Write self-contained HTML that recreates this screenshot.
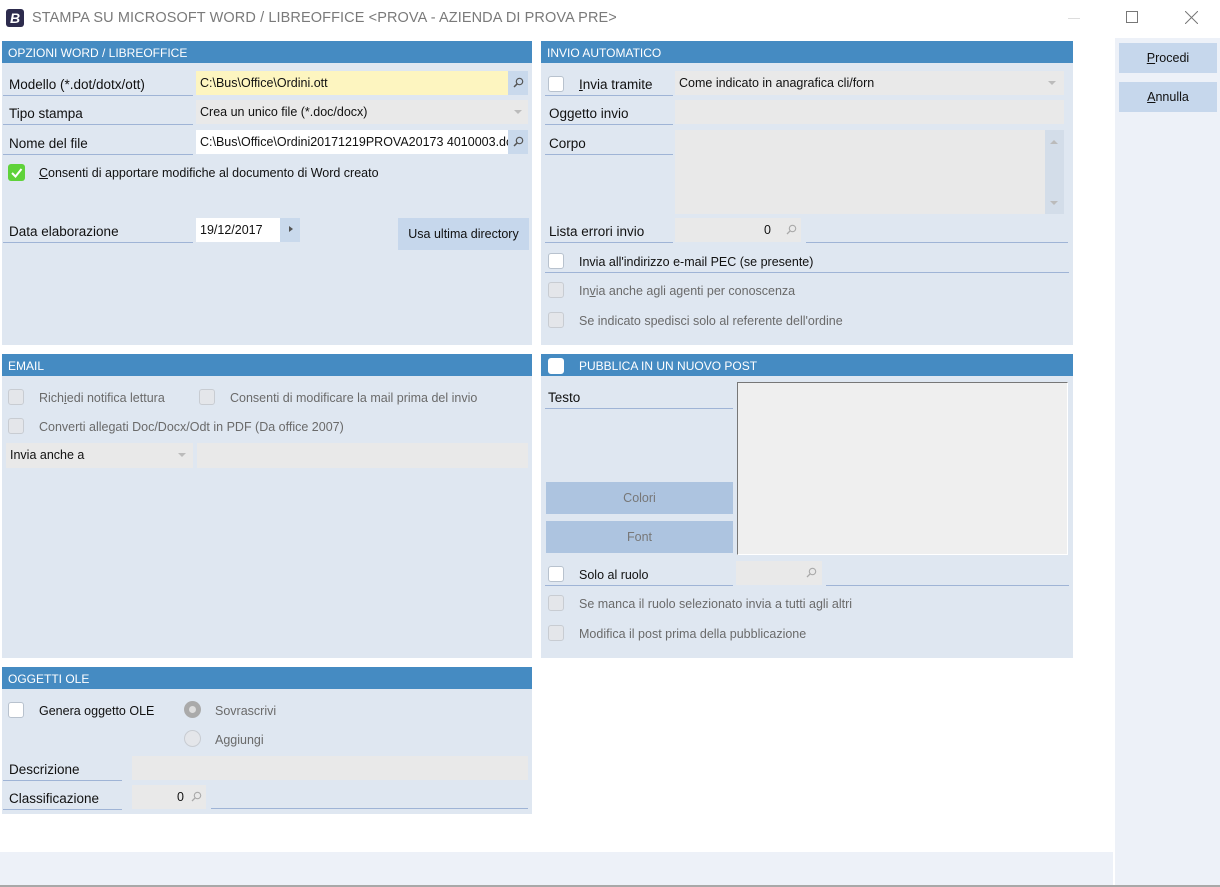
<!DOCTYPE html>
<html><head><meta charset="utf-8">
<style>
*{box-sizing:border-box;margin:0;padding:0}
body{width:1220px;height:887px;background:#fff;font-family:"Liberation Sans",sans-serif;font-size:13px;color:#111;position:relative;overflow:hidden}
.a{position:absolute}
.panel{position:absolute;background:#dfe7f1}
.hd{position:absolute;left:0;right:0;top:0;height:22px;background:#458bc2;color:#fff;font-size:12px;line-height:24px;padding-left:6px}
.lbl{position:absolute;border-bottom:1px solid #9fb4d6;font-size:13.5px;line-height:26px;padding-left:6px;height:24px}
.fld{position:absolute;background:#e9e9e9;height:24px;line-height:24px;padding-left:4px;font-size:12.5px}
.cb{position:absolute;width:16px;height:16px;background:#fff;border:1px solid #b8c2ce;border-radius:3px}
.cb.dis{background:#e4e6ea;border-color:#c8ccd2}
.txt{position:absolute;font-size:12.5px;line-height:16px}
.gray{color:#6a6a6a}
.btn{position:absolute;background:#adc4e0;text-align:center;font-size:12.5px}
.srch{position:absolute;width:20px;height:24px;background:#c9d9ec}
.line{position:absolute;height:1px;background:#9fb4d6}
.arrow{position:absolute;width:0;height:0;border-left:4px solid transparent;border-right:4px solid transparent;border-top:4px solid #bbb}
</style></head><body>
<div class="a" style="left:6px;top:9px;width:18px;height:18px;background:#2d2b4d;border-radius:3px;color:#fff;font-weight:bold;font-style:italic;font-size:14px;line-height:18px;text-align:center">B</div>
<div class="a" style="left:32px;top:10px;font-size:14.5px;color:#7a7a7a;letter-spacing:0.1px">STAMPA SU MICROSOFT WORD / LIBREOFFICE &lt;PROVA - AZIENDA DI PROVA PRE&gt;</div>
<div class="a" style="left:1068px;top:18px;width:12px;height:1px;background:#ddd"></div>
<div class="a" style="left:1126px;top:11px;width:12px;height:12px;border:1px solid #777"></div>
<svg class="a" style="left:1185px;top:11px" width="13" height="13"><path d="M0 0L13 13M13 0L0 13" stroke="#777" stroke-width="1"/></svg>

<div class="a" style="left:1115px;top:38px;width:105px;height:849px;background:#edf1f8"></div>
<div class="btn" style="left:1119px;top:43px;width:98px;height:30px;line-height:30px;background:#c6d7ec;color:#111"><u>P</u>rocedi</div>
<div class="btn" style="left:1119px;top:82px;width:98px;height:30px;line-height:30px;background:#c6d7ec;color:#111"><u>A</u>nnulla</div>
<div class="a" style="left:0;top:852px;width:1113px;height:33px;background:#edf1f8"></div>
<div class="a" style="left:0;top:885px;width:1220px;height:2px;background:#a8a8a8"></div>

<div class="panel" style="left:2px;top:41px;width:530px;height:304px">
 <div class="hd">OPZIONI WORD / LIBREOFFICE</div>
</div>
<div class="lbl" style="left:3px;top:72px;width:190px">Modello (*.dot/dotx/ott)</div>
<div class="fld" style="left:196px;top:71px;width:312px;background:#fdf5c0">C:\Bus\Office\Ordini.ott</div>
<div class="srch" style="left:508px;top:71px"></div>
<svg class="a" style="left:513px;top:77px" width="11" height="11"><circle cx="6.5" cy="4.5" r="3.2" fill="none" stroke="#555" stroke-width="1.2"/><path d="M4.2 6.8L1 10" stroke="#555" stroke-width="1.5"/></svg>
<div class="lbl" style="left:3px;top:101px;width:190px">Tipo stampa</div>
<div class="fld" style="left:196px;top:100px;width:332px">Crea un unico file (*.doc/docx)</div>
<div class="arrow" style="left:514px;top:110px"></div>
<div class="lbl" style="left:3px;top:131px;width:190px">Nome del file</div>
<div class="fld" style="left:196px;top:130px;width:312px;background:#fff;overflow:hidden;white-space:nowrap">C:\Bus\Office\Ordini20171219PROVA20173 4010003.doc</div>
<div class="srch" style="left:508px;top:130px"></div>
<svg class="a" style="left:513px;top:136px" width="11" height="11"><circle cx="6.5" cy="4.5" r="3.2" fill="none" stroke="#555" stroke-width="1.2"/><path d="M4.2 6.8L1 10" stroke="#555" stroke-width="1.5"/></svg>
<div class="a" style="left:8px;top:164px;width:17px;height:17px;background:#5fd23a;border-radius:3px"></div>
<svg class="a" style="left:8px;top:164px" width="17" height="17"><path d="M4 9L7.5 12.5L13.5 5" fill="none" stroke="#fff" stroke-width="2"/></svg>
<div class="txt" style="left:39px;top:165px"><u>C</u>onsenti di apportare modifiche al documento di Word creato</div>
<div class="lbl" style="left:3px;top:219px;width:190px">Data elaborazione</div>
<div class="fld" style="left:196px;top:218px;width:84px;background:#fff">19/12/2017</div>
<div class="srch" style="left:280px;top:218px;width:20px"></div>
<div class="a" style="left:289px;top:226px;width:0;height:0;border-top:3.5px solid transparent;border-bottom:3.5px solid transparent;border-left:4px solid #555"></div>
<div class="btn" style="left:398px;top:218px;width:131px;height:32px;line-height:32px;background:#c6d7ec;color:#111">Usa ultima directory</div>

<div class="panel" style="left:541px;top:41px;width:532px;height:304px">
 <div class="hd">INVIO AUTOMATICO</div>
</div>
<div class="lbl" style="left:545px;top:72px;width:128px;padding-left:34px"><u>I</u>nvia tramite</div>
<div class="cb" style="left:548px;top:76px"></div>
<div class="fld" style="left:675px;top:71px;width:389px">Come indicato in anagrafica cli/forn</div>
<div class="arrow" style="left:1048px;top:81px"></div>
<div class="lbl" style="left:545px;top:101px;width:128px;padding-left:4px">Oggetto invio</div>
<div class="fld" style="left:675px;top:100px;width:389px"></div>
<div class="lbl" style="left:545px;top:131px;width:128px;padding-left:4px">Corpo</div>
<div class="fld" style="left:675px;top:130px;width:370px;height:84px"></div>
<div class="a" style="left:1045px;top:130px;width:19px;height:84px;background:#d3dde9"></div>
<div class="a" style="left:1050px;top:140px;border-left:4px solid transparent;border-right:4px solid transparent;border-bottom:4px solid #bbb"></div>
<div class="a" style="left:1050px;top:201px;border-left:4px solid transparent;border-right:4px solid transparent;border-top:4px solid #bbb"></div>
<div class="lbl" style="left:545px;top:219px;width:128px;padding-left:4px">Lista errori invio</div>
<div class="fld" style="left:675px;top:218px;width:126px;text-align:right;padding-right:30px">0</div>
<svg class="a" style="left:786px;top:224px" width="11" height="11"><circle cx="6.5" cy="4.5" r="3.2" fill="none" stroke="#aaa" stroke-width="1.1"/><path d="M4.2 6.8L1 10" stroke="#aaa" stroke-width="1.3"/></svg>
<div class="line" style="left:806px;top:242px;width:262px"></div>
<div class="cb" style="left:548px;top:253px"></div>
<div class="txt" style="left:579px;top:254px">Invia all'indirizzo e-mail PEC (se presente)</div>
<div class="line" style="left:545px;top:272px;width:524px"></div>
<div class="cb dis" style="left:548px;top:282px"></div>
<div class="txt gray" style="left:579px;top:283px">In<u>v</u>ia anche agli agenti per conoscenza</div>
<div class="cb dis" style="left:548px;top:312px"></div>
<div class="txt gray" style="left:579px;top:313px">Se indicato spedisci solo al referente dell'ordine</div>

<div class="panel" style="left:2px;top:354px;width:530px;height:304px">
 <div class="hd">EMAIL</div>
</div>
<div class="cb dis" style="left:8px;top:389px"></div>
<div class="txt gray" style="left:39px;top:390px">Rich<u>i</u>edi notifica lettura</div>
<div class="cb dis" style="left:199px;top:389px"></div>
<div class="txt gray" style="left:230px;top:390px">Consenti di modificare la mail prima del invio</div>
<div class="cb dis" style="left:8px;top:418px"></div>
<div class="txt gray" style="left:39px;top:419px">Converti allegati Doc/Docx/Odt in PDF (Da office 2007)</div>
<div class="fld" style="left:6px;top:443px;width:187px;height:25px">Invia anche a</div>
<div class="arrow" style="left:178px;top:453px"></div>
<div class="fld" style="left:197px;top:443px;width:331px;height:25px"></div>

<div class="panel" style="left:541px;top:354px;width:532px;height:304px">
 <div class="hd" style="padding-left:38px">PUBBLICA IN UN NUOVO POST</div>
</div>
<div class="cb" style="left:548px;top:358px;border-color:#fff"></div>
<div class="lbl" style="left:545px;top:385px;width:188px;padding-left:3px">Testo</div>
<div class="a" style="left:737px;top:382px;width:331px;height:173px;background:#efefef;border:1px solid #777;border-right-color:#fff;border-bottom-color:#fff"></div>
<div class="btn" style="left:546px;top:482px;width:187px;height:32px;line-height:32px;color:#777">Colori</div>
<div class="btn" style="left:546px;top:521px;width:187px;height:32px;line-height:32px;color:#777">Font</div>
<div class="lbl" style="left:545px;top:562px;width:188px;padding-left:34px;font-size:12.5px">Solo al ruolo</div>
<div class="cb" style="left:548px;top:566px"></div>
<div class="fld" style="left:736px;top:561px;width:86px"></div>
<svg class="a" style="left:806px;top:567px" width="11" height="11"><circle cx="6.5" cy="4.5" r="3.2" fill="none" stroke="#aaa" stroke-width="1.1"/><path d="M4.2 6.8L1 10" stroke="#aaa" stroke-width="1.3"/></svg>
<div class="line" style="left:826px;top:585px;width:243px"></div>
<div class="cb dis" style="left:548px;top:595px"></div>
<div class="txt gray" style="left:579px;top:596px">Se manca il ruolo selezionato invia a tutti agli altri</div>
<div class="cb dis" style="left:548px;top:625px"></div>
<div class="txt gray" style="left:579px;top:626px">Modifica il post prima della pubblicazione</div>

<div class="panel" style="left:2px;top:667px;width:530px;height:147px">
 <div class="hd">OGGETTI OLE</div>
</div>
<div class="cb" style="left:8px;top:702px"></div>
<div class="txt" style="left:39px;top:703px">Genera oggetto OLE</div>
<div class="a" style="left:184px;top:701px;width:17px;height:17px;border-radius:50%;background:#aaa"></div>
<div class="a" style="left:189px;top:706px;width:7px;height:7px;border-radius:50%;background:#ddd"></div>
<div class="txt gray" style="left:215px;top:703px">Sovrascrivi</div>
<div class="a" style="left:184px;top:730px;width:17px;height:17px;border-radius:50%;background:#e4e6ea;border:1px solid #c8ccd2"></div>
<div class="txt gray" style="left:215px;top:732px">Aggiungi</div>
<div class="lbl" style="left:3px;top:757px;width:119px;padding-left:6px">Descrizione</div>
<div class="fld" style="left:132px;top:756px;width:396px"></div>
<div class="lbl" style="left:3px;top:786px;width:119px;padding-left:6px">Classificazione</div>
<div class="fld" style="left:132px;top:785px;width:74px;text-align:right;padding-right:22px">0</div>
<svg class="a" style="left:191px;top:791px" width="11" height="11"><circle cx="6.5" cy="4.5" r="3.2" fill="none" stroke="#aaa" stroke-width="1.1"/><path d="M4.2 6.8L1 10" stroke="#aaa" stroke-width="1.3"/></svg>
<div class="line" style="left:211px;top:808px;width:317px"></div>
</body></html>
